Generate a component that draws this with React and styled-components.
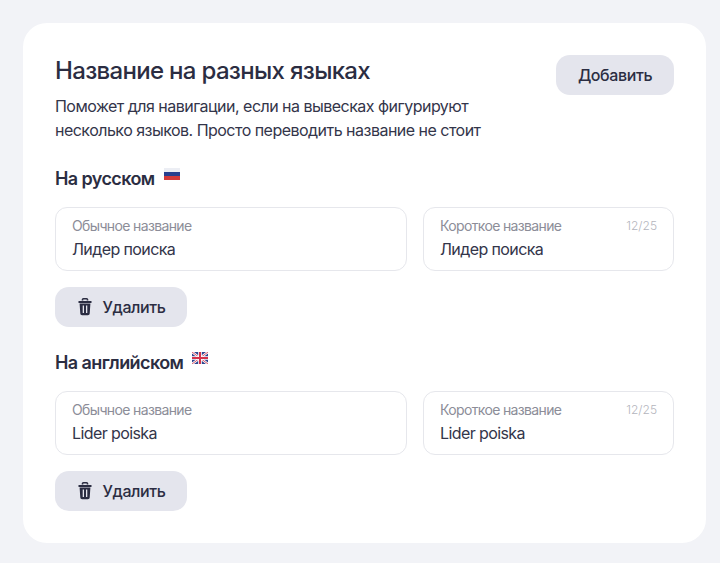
import React from "react";
import styled, { createGlobalStyle } from "styled-components";

const GlobalStyle = createGlobalStyle`
  html, body {
    margin: 0;
    padding: 0;
    background: #f2f3f7;
    font-family: "Inter", "Noto Sans", sans-serif;
    color: #2b2d42;
  }
`;

const languages = [
  { id: "ru", title: "На русском", flag: "ru", value: "Лидер поиска" },
  { id: "en", title: "На английском", flag: "uk", value: "Lider poiska" },
];

const RuFlag = () => (
  <svg width="16" height="12" viewBox="0 0 16 12">
    <rect width="16" height="4" fill="#eceef4" />
    <rect y="4" width="16" height="4" fill="#27408f" />
    <rect y="8" width="16" height="4" fill="#d23a3a" />
  </svg>
);

const UkFlag = () => (
  <svg width="16" height="12" viewBox="0 0 16 12">
    <rect width="16" height="12" fill="#2f4590" />
    <path d="M0 0L16 12M16 0L0 12" stroke="#fff" strokeWidth="2.4" />
    <path d="M0 0L16 12M16 0L0 12" stroke="#d5455a" strokeWidth="0.9" />
    <path d="M8 0V12M0 6H16" stroke="#fff" strokeWidth="3.6" />
    <path d="M8 0V12M0 6H16" stroke="#d5304a" strokeWidth="2" />
  </svg>
);

const TrashIcon = () => (
  <svg width="16" height="18" viewBox="0 0 16 18" fill="none">
    <path d="M5.5 2.5V1.6C5.5 1 6 .8 6.4 .8H9.6C10 .8 10.5 1 10.5 1.6V2.5" stroke="#2b2d42" strokeWidth="1.6" />
    <path d="M1.5 3H14.5V5H1.5Z" fill="#2b2d42" />
    <path fillRule="evenodd" d="M2.6 5.5H13.4L12.7 15.6C12.6 16.6 11.9 17.2 10.9 17.2H5.1C4.1 17.2 3.4 16.6 3.3 15.6ZM5.7 7.5V15H7V7.5ZM9 7.5V15H10.3V7.5Z" fill="#2b2d42" />
  </svg>
);

export default function App() {
  return (
    <Page>
      <GlobalStyle />
      <Card>
        <Header>
          <div>
            <Title>Название на разных языках</Title>
            <Description>
              Поможет для навигации, если на вывесках фигурируют
              <br />
              несколько языков. Просто переводить название не стоит
            </Description>
          </div>
          <AddButton>Добавить</AddButton>
        </Header>
        {languages.map((lang) => (
          <Section key={lang.id}>
            <SectionTitle>
              {lang.title}
              <FlagWrap>{lang.flag === "ru" ? <RuFlag /> : <UkFlag />}</FlagWrap>
            </SectionTitle>
            <Fields>
              <Field>
                <FieldTop>
                  <FieldLabel>Обычное название</FieldLabel>
                </FieldTop>
                <FieldValue>{lang.value}</FieldValue>
              </Field>
              <Field>
                <FieldTop>
                  <FieldLabel>Короткое название</FieldLabel>
                  <Counter>12/25</Counter>
                </FieldTop>
                <FieldValue>{lang.value}</FieldValue>
              </Field>
            </Fields>
            <DeleteButton>
              <TrashIcon />
              Удалить
            </DeleteButton>
          </Section>
        ))}
      </Card>
    </Page>
  );
}

const Page = styled.div`
  box-sizing: border-box;
  width: 720px;
  height: 563px;
  padding: 23px 14px 20px 23px;
  overflow: hidden;
`;
const Card = styled.div`
  box-sizing: border-box;
  height: 520px;
  padding: 32px;
  background: #fff;
  border-radius: 24px;
`;
const Header = styled.div`
  display: flex;
  justify-content: space-between;
  align-items: flex-start;
`;
const Title = styled.h1`
  margin: 1px 0 8px;
  font-size: 24px;
  line-height: 30px;
  font-weight: 500;
  letter-spacing: -0.68px;
`;
const Description = styled.p`
  margin: 0;
  font-size: 16px;
  line-height: 24px;
  letter-spacing: -0.52px;
  color: #33354a;
`;
const BaseButton = styled.button`
  height: 40px;
  border: none;
  border-radius: 14px;
  background: #e4e5ed;
  color: #2b2d42;
  font-family: inherit;
  font-size: 16px;
  font-weight: 500;
  letter-spacing: -0.4px;
  padding: 0;
`;
const AddButton = styled(BaseButton)`
  width: 118px;
`;
const DeleteButton = styled(BaseButton)`
  display: flex;
  align-items: center;
  justify-content: center;
  gap: 10px;
  width: 132px;
`;
const Section = styled.section`
  margin-top: 25px;
  & + & {
    margin-top: 24px;
  }
`;
const SectionTitle = styled.h2`
  display: flex;
  align-items: flex-start;
  gap: 9px;
  margin: 0 0 16px;
  font-size: 18px;
  line-height: 24px;
  font-weight: 600;
  letter-spacing: -0.6px;
`;
const FlagWrap = styled.span`
  display: block;
  height: 12px;
  margin-top: 1px;
  line-height: 0;
`;
const Fields = styled.div`
  display: grid;
  grid-template-columns: 352px 251px;
  gap: 16px;
  margin-bottom: 16px;
`;
const Field = styled.div`
  box-sizing: border-box;
  height: 64px;
  padding: 8px 16px;
  border: 1px solid #e6e7ec;
  border-radius: 12px;
`;
const FieldTop = styled.div`
  display: flex;
  justify-content: space-between;
  align-items: center;
  height: 18px;
`;
const FieldLabel = styled.span`
  font-size: 14px;
  color: #8c8d98;
  letter-spacing: -0.64px;
`;
const Counter = styled.span`
  font-size: 12px;
  font-weight: 300;
  color: #b4b5bd;
`;
const FieldValue = styled.div`
  margin-top: 4px;
  font-size: 16px;
  line-height: 22px;
  letter-spacing: -0.6px;
  color: #33354a;
`;
